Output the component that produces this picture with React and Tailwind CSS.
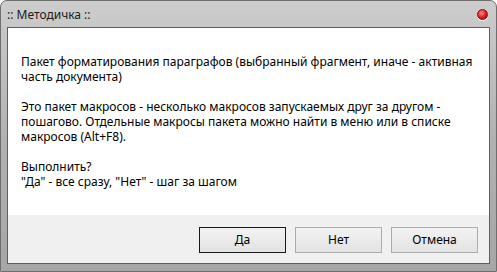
import React from "react";

function DlgButton({ label, isDefault }) {
    return (
        <button
            type="button"
            className={
                "w-[87px] h-[26px] text-[12px] text-black bg-gradient-to-b from-[#f2f2f2] to-[#e3e3e3] " +
                (isDefault ? "border border-[#1a1a1a]" : "border border-[#acacac]")
            }
        >
            {label}
        </button>
    );
}

export default function App() {
    return (
        <div
            className="w-[497px] h-[272px] bg-white"
            style={{ fontFamily: '"Noto Sans", "Segoe UI", sans-serif' }}
        >
            <div className="w-full h-full flex flex-col rounded-t-[7px] border border-[#6e6e6e] bg-gradient-to-b from-[#cdcdcd] via-[#b2b2b2] to-[#a6a6a6]">
                {/* заголовок */}
                <div className="h-[26px] flex items-center justify-between pl-[6px] pr-[8px]">
                    <span className="text-[12px] text-[#1b1b1b] leading-none pt-[1px]">:: Методичка ::</span>
                    <span className="w-[11px] h-[11px] rounded-full border border-[#8a1010] bg-[radial-gradient(circle_at_40%_35%,#ff8a8a,#e01818_55%,#a00000)] shadow-[0_1px_0_#ffffff]" />
                </div>

                <div className="flex-1 mx-[6px] mb-[7px] border border-[#5e5e5e] flex flex-col">
                    <div className="flex-1 bg-white pl-[13px] pt-[26px] text-[12px] leading-[15px] text-black whitespace-nowrap">
                        <p>Пакет форматирования параграфов (выбранный фрагмент, иначе - активная</p>
                        <p>часть документа)</p>
                        <p className="mt-[15px]">Это пакет макросов - несколько макросов запускаемых друг за другом -</p>
                        <p>пошагово. Отдельные макросы пакета можно найти в меню или в списке</p>
                        <p>макросов (Alt+F8).</p>
                        <p className="mt-[15px]">Выполнить?</p>
                        <p>"Да" - все сразу, "Нет" - шаг за шагом</p>
                    </div>
                    <div className="h-[48px] bg-[#f0f0f0] flex justify-end items-start pt-[12px] pr-[11px] gap-[9px]">
                        <DlgButton label="Да" isDefault />
                        <DlgButton label="Нет" />
                        <DlgButton label="Отмена" />
                    </div>
                </div>
            </div>
        </div>
    );
}
